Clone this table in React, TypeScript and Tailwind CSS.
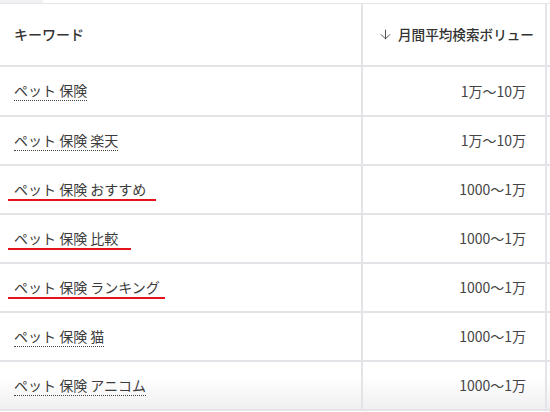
import { ArrowDown } from "lucide-react";

type Row = {
  keyword: string;
  volume: string;
  red?: number;
  h?: string;
  fade?: boolean;
};

const ROWS: Row[] = [
  { keyword: "ペット 保険", volume: "1万〜10万", h: "h-[50px]" },
  { keyword: "ペット 保険 楽天", volume: "1万〜10万" },
  { keyword: "ペット 保険 おすすめ ", volume: "1000〜1万", red: 148 },
  { keyword: "ペット 保険 比較 ", volume: "1000〜1万", red: 123 },
  { keyword: "ペット 保険 ランキング", volume: "1000〜1万", red: 157 },
  { keyword: "ペット 保険 猫", volume: "1000〜1万" },
  { keyword: "ペット 保険 アニコム", volume: "1000〜1万", fade: true },
];

export default function App() {
  return (
    <div
      className="h-[412px] w-[550px] overflow-hidden bg-white text-[14px] text-[#3b3b3b]"
      style={{ fontFamily: '"Noto Sans CJK JP", "Noto Sans", sans-serif' }}
    >
      {/* 上の切れ端 */}
      <div className="flex h-[3px]">
        <div className="w-[43px] bg-[#f1f1f3]" />
      </div>

      <div className="border-t border-[#e6e6ea]">
        {/* ヘッダー */}
        <div className="flex h-[63px] border-b-2 border-[#e3e3e8]">
          <div className="flex w-[361px] items-center pl-[14px] font-medium text-[#333]">
            キーワード
          </div>
          <div className="flex w-[186px] items-center gap-[5px] overflow-hidden whitespace-nowrap border-x-2 border-[#e3e3e8] pl-[15px] font-medium text-[#333]">
            <ArrowDown className="h-[15px] w-[15px] shrink-0 text-[#555]" strokeWidth={1.6} />
            <span className="text-[13.6px]">月間平均検索ボリュー</span>
          </div>
          <div className="flex-1" />
        </div>

        {ROWS.map((r) => (
          <div
            key={r.keyword}
            className={`flex border-b-2 border-[#e3e3e8] ${r.h ?? "h-[49px]"} ${
              r.fade ? "bg-linear-to-b from-white from-35% to-[#efeff1]" : ""
            }`}
          >
            <div className="flex w-[361px] items-center pl-[14px]">
              <span className="relative whitespace-pre border-b border-dotted border-[#444] leading-[19px]">
                {r.keyword}
                {r.red && (
                  <span
                    className="absolute bottom-[-2px] left-[-6px] h-[1.5px] bg-[#e3121c]"
                    style={{ width: r.red }}
                  />
                )}
              </span>
            </div>
            <div className="flex w-[186px] items-center justify-end border-x-2 border-[#e3e3e8] pr-[19px] text-[#444]">
              {r.volume}
            </div>
            <div className="flex-1" />
          </div>
        ))}
      </div>
    </div>
  );
}
